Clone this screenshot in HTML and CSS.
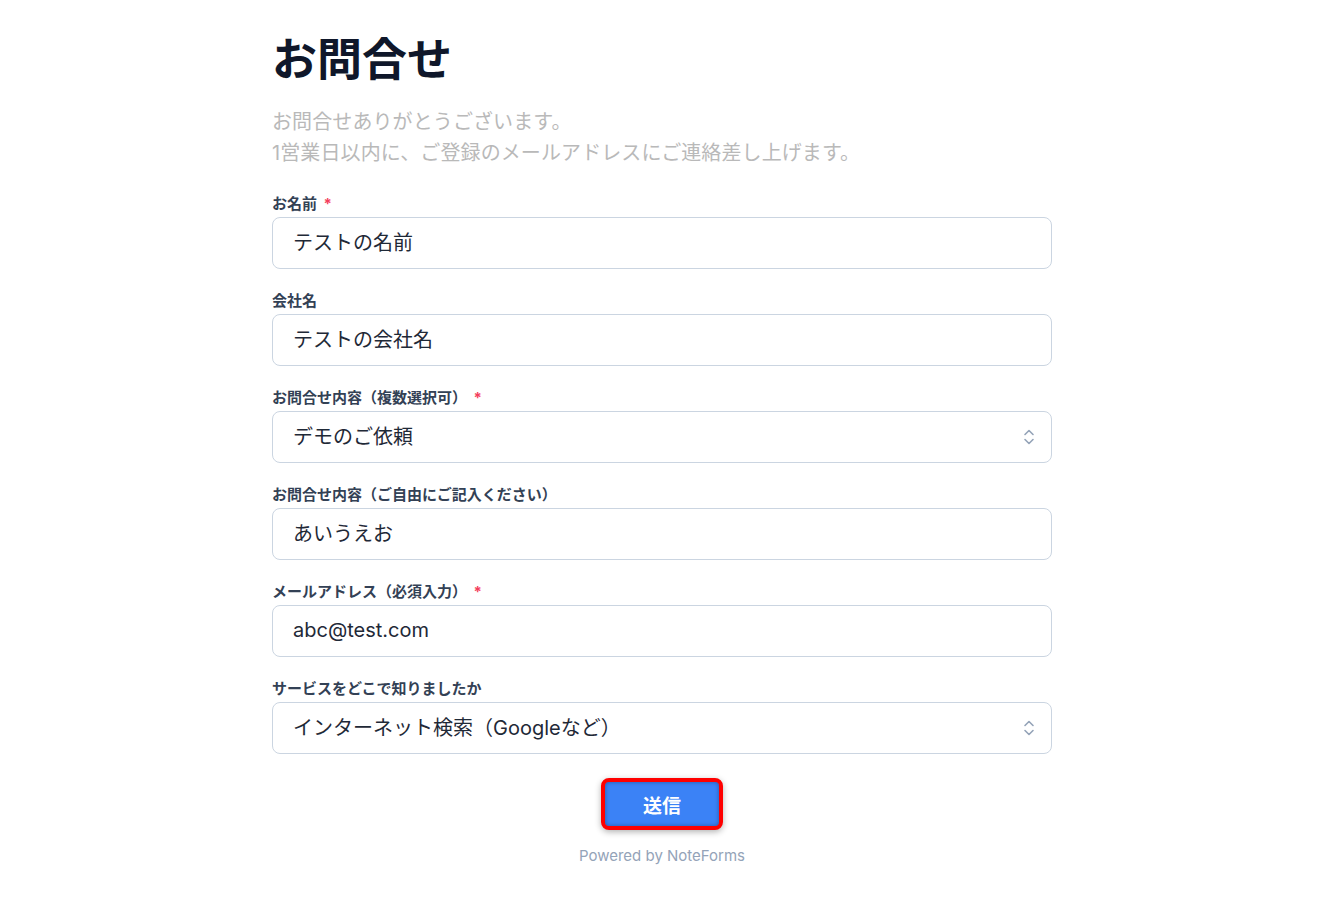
FILE: index.html
```html
<!DOCTYPE html>
<html>

<head>
	<meta charset="UTF-8">
	<title>お問合せ</title>
	<link rel="stylesheet" href="styles.css">
</head>

<body>
	<main class="page">
		<form class="contact-form" action="#" method="POST">
			<h1 class="form-title">お問合せ</h1>
			<p class="form-lead">お問合せありがとうございます。<br>1営業日以内に、ご登録のメールアドレスにご連絡差し上げます。</p>

			<div class="field">
				<label class="field-label">お名前 <span class="required">*</span></label>
				<div class="field-input">テストの名前</div>
			</div>

			<div class="field">
				<label class="field-label">会社名</label>
				<div class="field-input">テストの会社名</div>
			</div>

			<div class="field">
				<label class="field-label">お問合せ内容（複数選択可） <span class="required">*</span></label>
				<div class="field-input field-select">
					<span>デモのご依頼</span>
					<svg class="select-icon" width="14" height="20" viewBox="0 0 14 20" fill="none" stroke="currentColor" stroke-width="1.6" stroke-linecap="round" stroke-linejoin="round">
						<path d="M3 7.5 L7 3.5 L11 7.5" />
						<path d="M3 12.5 L7 16.5 L11 12.5" />
					</svg>
				</div>
			</div>

			<div class="field">
				<label class="field-label">お問合せ内容（ご自由にご記入ください）</label>
				<div class="field-input">あいうえお</div>
			</div>

			<div class="field">
				<label class="field-label">メールアドレス（必須入力） <span class="required">*</span></label>
				<div class="field-input">abc@test.com</div>
			</div>

			<div class="field">
				<label class="field-label">サービスをどこで知りましたか</label>
				<div class="field-input field-select">
					<span>インターネット検索（Googleなど）</span>
					<svg class="select-icon" width="14" height="20" viewBox="0 0 14 20" fill="none" stroke="currentColor" stroke-width="1.6" stroke-linecap="round" stroke-linejoin="round">
						<path d="M3 7.5 L7 3.5 L11 7.5" />
						<path d="M3 12.5 L7 16.5 L11 12.5" />
					</svg>
				</div>
			</div>

			<div class="submit-row">
				<button type="submit" class="submit-button">送信</button>
			</div>

			<p class="powered">Powered by NoteForms</p>
		</form>
	</main>
</body>

</html>
```
FILE: styles.css
```css
body {
	margin: 0;
	background: #ffffff;
	font-family: Inter, "Noto Sans CJK JP", sans-serif;
}

.page {
	width: 800px;
	margin: 0 auto;
	padding-top: 33px;
}

.contact-form {
	width: 780px;
}

.form-title {
	margin: 0;
	font-size: 45px;
	line-height: 54px;
	font-weight: 700;
	color: #0f172a;
}

.form-lead {
	margin: 20px 0 0;
	font-size: 20px;
	line-height: 31px;
	letter-spacing: 0.1px;
	color: #b9b9b9;
}

.field {
	margin-top: 22px;
}

.field:first-of-type {
	margin-top: 25px;
}

.field-label {
	display: block;
	font-size: 15px;
	line-height: 20px;
	font-weight: 700;
	color: #334155;
	margin-bottom: 3px;
}

.required {
	color: #f43f5e;
	margin-left: 3px;
}

.field-input {
	box-sizing: border-box;
	height: 52px;
	border: 1px solid #cbd5e1;
	border-radius: 8px;
	padding: 0 20px 3px;
	display: flex;
	align-items: center;
	font-size: 20px;
	color: #1f2937;
}

.field-select {
	justify-content: space-between;
	padding-right: 15px;
	padding-bottom: 0;
}

.field-select span {
	padding-bottom: 3px;
}

.select-icon {
	color: #94a3b8;
}

.submit-row {
	display: flex;
	justify-content: center;
	margin-top: 24px;
}

.submit-button {
	width: 122px;
	height: 52px;
	border: 4px solid #ff0000;
	border-radius: 8px;
	background: #3b82f6;
	color: #ffffff;
	font-family: Inter, "Noto Sans CJK JP", sans-serif;
	font-size: 19px;
	font-weight: 700;
	box-shadow: inset 0 0 4px rgba(0, 0, 0, 0.35), 0 2px 6px rgba(0, 0, 0, 0.3);
	cursor: pointer;
}

.powered {
	margin: 16px 0 0;
	text-align: center;
	font-size: 15px;
	line-height: 20px;
	color: #94a3b8;
}
```
